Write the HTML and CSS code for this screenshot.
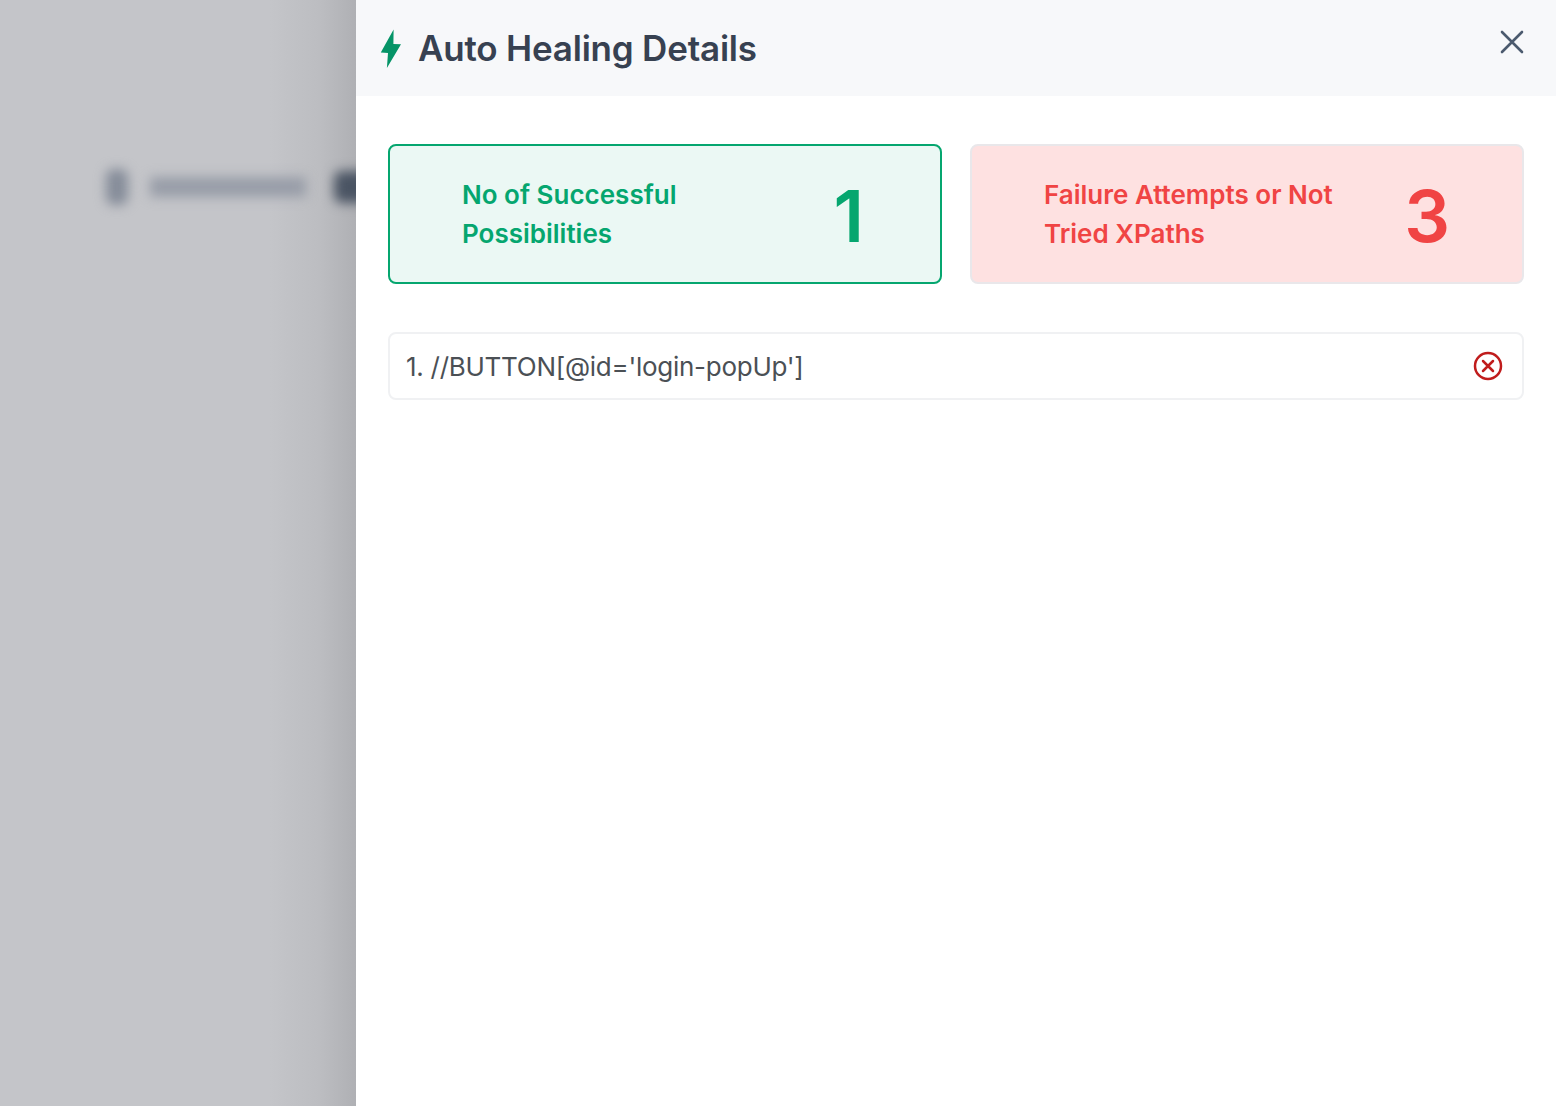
FILE: index.html
```html
<!doctype html>
<html>
<head>
<meta charset="utf-8">
<title>Auto Healing Details</title>
<link rel="stylesheet" href="styles.css">
</head>

<body>
<div class="page">
    <div class="backdrop">
        <div class="blur-row">
            <span class="blur-icon"></span>
            <span class="blur-text"></span>
            <span class="blur-dark"></span>
        </div>
    </div>
    <div class="drawer">
        <div class="drawer-head">
            <svg class="bolt" viewBox="0 0 22 40" width="22" height="40"><path d="M13.6 1.6 L0.8 24.4 L8 25 L6.9 40 L21 16.2 L13.4 16 Z" fill="#059467"/></svg>
            <h1 class="title">Auto Healing Details</h1>
            <svg class="close" viewBox="0 0 24 24" width="24" height="24"><path d="M2 2 L22 22 M22 2 L2 22" fill="none" stroke="#4b5a6e" stroke-width="2.6" stroke-linecap="round"/></svg>
        </div>
        <div class="drawer-body">
            <div class="stats">
                <div class="stat stat-ok">
                    <div class="stat-label">No of Successful Possibilities</div>
                    <div class="stat-num">1</div>
                </div>
                <div class="stat stat-fail">
                    <div class="stat-label">Failure Attempts or Not Tried XPaths</div>
                    <div class="stat-num">3</div>
                </div>
            </div>
            <div class="xpath">
                <span>1. //BUTTON[@id='login-popUp']</span>
                <svg class="xpath-icon" viewBox="0 0 30 30" width="30" height="30"><circle cx="15" cy="15" r="13" fill="none" stroke="#c01c1c" stroke-width="2.5"/><path d="M10 10 L20 20 M20 10 L10 20" fill="none" stroke="#c01c1c" stroke-width="2.5" stroke-linecap="round"/></svg>
            </div>
        </div>
    </div>
</div>
</body>
</html>
```

FILE: styles.css
```css
html, body { margin: 0; height: 100%; }
body { font-family: Inter, "Liberation Sans", Arial, sans-serif; color: #374151; background: #fff; }
.page { display: flex; height: 1106px; overflow: hidden; }

.backdrop { width: 356px; flex: none; box-sizing: border-box; padding: 172px 0 0 106px; overflow: hidden; background: linear-gradient(to right, #c4c5c9 0, #c4c5c9 270px, #bcbdc1 320px, #afb0b4 356px); }
.blur-row { display: flex; align-items: center; height: 30px; filter: blur(6px); }
.blur-icon { width: 22px; height: 36px; background: #858c99; border-radius: 8px; margin-right: 22px; flex: none; }
.blur-text { width: 156px; height: 20px; background: #989da8; margin-right: 28px; flex: none; }
.blur-dark { width: 40px; height: 32px; background: #4a5463; border-radius: 8px; flex: none; }

.drawer { flex: 1; background: #fff; }
.drawer-head { display: flex; align-items: center; height: 96px; padding: 0 32px 0 24px; background: #f7f8fa; }
.bolt { flex: none; margin-right: 16px; }
.title { flex: 1; margin: 0; font-size: 35px; font-weight: 600; letter-spacing: -0.2px; color: #374151; }
.close { margin-top: -12px; flex: none; }

.drawer-body { padding: 48px 32px; }
.stats { display: flex; gap: 28px; margin-bottom: 48px; }
.stat { flex: 1; height: 140px; box-sizing: border-box; display: flex; align-items: center; justify-content: space-between; padding: 0 72px; border-radius: 8px; border: 2px solid; }
.stat-ok { background: #ebf8f4; border-color: #05a66f; color: #05a66f; }
.stat-fail { background: #fee1e1; border-color: #e9e7ea; color: #f04444; }
.stat-label { width: 300px; font-size: 26px; line-height: 39px; font-weight: 600; }
.stat-num { margin-top: 3px; font-size: 72px; font-weight: 600; line-height: 1; }
.stat-ok .stat-num { margin-right: 4px; }

.xpath { display: flex; align-items: center; justify-content: space-between; height: 68px; box-sizing: border-box; padding: 0 19px 0 16px; border: 2px solid #f0f1f3; border-radius: 8px; font-size: 26px; letter-spacing: -0.27px; color: #4b5055; }
.xpath-icon { flex: none; }
```
